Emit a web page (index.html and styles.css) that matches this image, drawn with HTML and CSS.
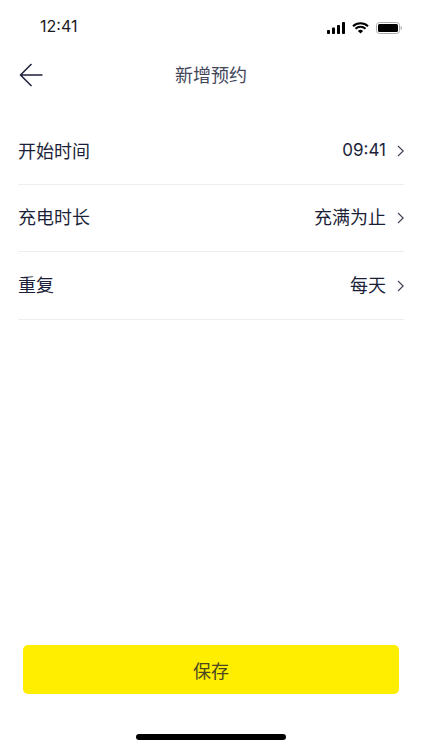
FILE: index.html
```html
<!DOCTYPE html>
<html lang="zh-CN">
<head>
<meta charset="utf-8">
<title>新增预约</title>
<link rel="stylesheet" href="styles.css">
</head>
<body>
<div class="screen">
  <header class="status">
    <span class="time">12:41</span>
    <div class="status-icons">
      <svg class="signal" width="18" height="12" viewBox="0 0 18 12"><rect x="0" y="8" width="3" height="4" rx=".8"/><rect x="5" y="5.5" width="3" height="6.5" rx=".8"/><rect x="10" y="3" width="3" height="9" rx=".8"/><rect x="15" y="0" width="3" height="12" rx=".8"/></svg>
      <svg class="wifi" width="17" height="12" viewBox="0 0 17 12"><path d="M1 4.2a10.8 10.8 0 0 1 15 0M3.5 6.8a7.2 7.2 0 0 1 10 0" fill="none" stroke="#000" stroke-width="2"/><path d="M5.9 8.9a3.8 3.8 0 0 1 5.2 0L8.5 11.6z"/></svg>
      <svg class="battery" width="26" height="12" viewBox="0 0 26 12"><rect x=".5" y=".5" width="23" height="11" rx="3" fill="none" stroke="#aaa"/><rect x="2" y="2" width="20" height="8" rx="1.6"/><path d="M24.6 4v4c.8-.3 1.3-1.100 1.300-2s-.5-1.700-1.300-2z" fill="#aaa"/></svg>
    </div>
  </header>
  <nav class="nav">
    <svg class="back" width="24" height="24" viewBox="0 0 24 24"><path d="M12.500 1 1.500 12l11 11M1.500 12H23.500" fill="none" stroke="#1c1f3a" stroke-width="1.500"/></svg>
    <h1 class="title">新增预约</h1>
  </nav>
  <main class="list">
    <div class="row">
      <span class="label">开始时间</span>
      <span class="value num">09:41</span>
      <svg class="chev" width="8" height="12" viewBox="0 0 8 12"><path d="M2 1l5.200 5-5.200 5" fill="none" stroke="#3b3e52" stroke-width="1.100"/></svg>
    </div>
    <div class="row">
      <span class="label">充电时长</span>
      <span class="value">充满为止</span>
      <svg class="chev" width="8" height="12" viewBox="0 0 8 12"><path d="M2 1l5.200 5-5.200 5" fill="none" stroke="#3b3e52" stroke-width="1.100"/></svg>
    </div>
    <div class="row">
      <span class="label">重复</span>
      <span class="value">每天</span>
      <svg class="chev" width="8" height="12" viewBox="0 0 8 12"><path d="M2 1l5.200 5-5.200 5" fill="none" stroke="#3b3e52" stroke-width="1.100"/></svg>
    </div>
  </main>
  <footer class="foot">
    <button class="save">保存</button>
    <div class="home"></div>
  </footer>
</div>
</body>
</html>
```
FILE: styles.css
```css
* { box-sizing: border-box; }
html, body { margin: 0; padding: 0; background: #fff; }
body { font-family: "Noto Sans CJK SC", "Inter", sans-serif; }
.screen { width: 422px; height: 750px; display: flex; flex-direction: column; overflow: hidden; }
.status { height: 52px; padding: 0 20px 0 40px; display: flex; align-items: center; justify-content: space-between; }
.time { font: 16px/20px "Inter", "Liberation Sans", sans-serif; color: #1b1b1f; }
.status-icons { display: flex; align-items: center; gap: 7px; padding-top: 3px; }
.status-icons svg { display: block; }
.nav { height: 46px; padding-bottom: 2px; position: relative; display: flex; align-items: center; justify-content: center; }
.back { position: absolute; left: 19px; top: 11px; }
.title { margin: 0; font-size: 18px; font-weight: 400; line-height: 24px; color: #43465a; }
.list { margin: 21px 18px 0; }
.row { height: 68px; padding-bottom: 3px; display: flex; align-items: center; border-bottom: 1px solid #eeeeef; color: #1c1f3a; }
.row:first-child { height: 66px; padding-bottom: 4px; }
.row:nth-child(2) { height: 67px; padding-bottom: 4px; }
.label { flex: 1; font-size: 18px; }
.value { font-size: 18px; margin-right: 10px; }
.value.num { font-family: "Inter", "Liberation Sans", sans-serif; font-size: 17px; }
.chev { display: block; margin-top: 3px; }
.foot { margin-top: auto; padding: 0 23px 10px; display: flex; flex-direction: column; align-items: center; }
.save { width: 100%; height: 49px; padding-bottom: 1px; border: 0; border-radius: 5px; background: #ffee00; color: #4a4620; font: inherit; font-size: 18px; }
.home { width: 150px; height: 6px; margin-top: 40px; border-radius: 3px; background: #000; }
```
